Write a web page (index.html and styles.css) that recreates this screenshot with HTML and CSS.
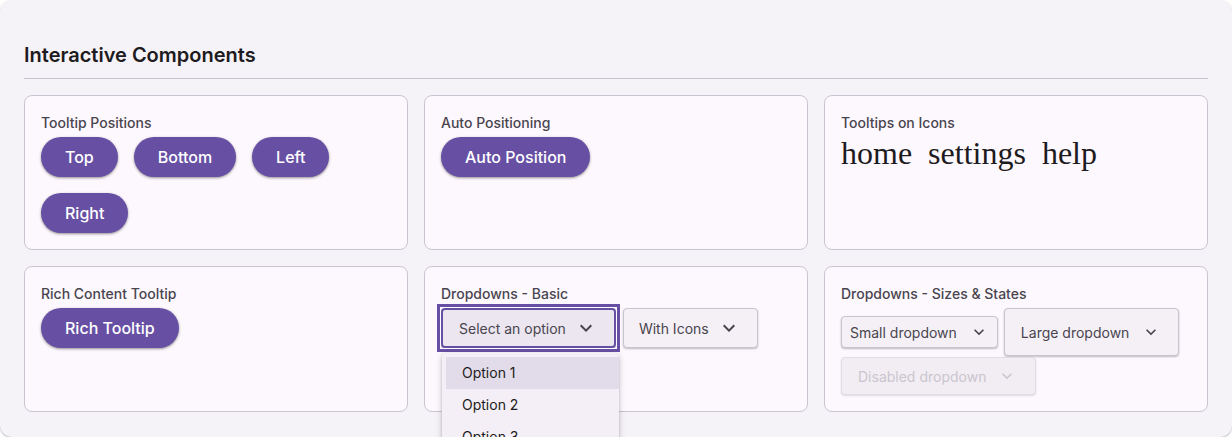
FILE: index.html
```html
<!DOCTYPE html>
<html lang="en">
<head>
<meta charset="utf-8">
<title>Interactive Components</title>
<link rel="stylesheet" href="styles.css">
</head>
<body>
<section class="panel">
  <h2 class="panel-title">Interactive Components</h2>
  <div class="grid">
    <div class="card">
      <div class="card-label">Tooltip Positions</div>
      <div class="btn-row">
        <button class="pill">Top</button>
        <button class="pill">Bottom</button>
        <button class="pill">Left</button>
        <button class="pill">Right</button>
      </div>
    </div>
    <div class="card">
      <div class="card-label">Auto Positioning</div>
      <div class="btn-row">
        <button class="pill">Auto Position</button>
      </div>
    </div>
    <div class="card">
      <div class="card-label">Tooltips on Icons</div>
      <div class="icon-row">
        <span class="icon-text">home</span>
        <span class="icon-text">settings</span>
        <span class="icon-text">help</span>
      </div>
    </div>
    <div class="card">
      <div class="card-label">Rich Content Tooltip</div>
      <div class="btn-row">
        <button class="pill">Rich Tooltip</button>
      </div>
    </div>
    <div class="card card-menu">
      <div class="card-label">Dropdowns - Basic</div>
      <div class="dd-row">
        <div class="dd-wrap">
          <button class="dd dd-md dd-focus">Select an option
            <svg class="chev chev-24" viewBox="0 0 24 24"><path d="M16.59 8.59L12 13.17 7.41 8.59 6 10l6 6 6-6z"/></svg>
          </button>
          <ul class="menu">
            <li class="menu-item active">Option 1</li>
            <li class="menu-item">Option 2</li>
            <li class="menu-item">Option 3</li>
          </ul>
        </div>
        <button class="dd dd-md">With Icons
          <svg class="chev chev-24" viewBox="0 0 24 24"><path d="M16.59 8.59L12 13.17 7.41 8.59 6 10l6 6 6-6z"/></svg>
        </button>
      </div>
    </div>
    <div class="card">
      <div class="card-label">Dropdowns - Sizes &amp; States</div>
      <div class="dd-sizes">
        <button class="dd dd-sm">Small dropdown
          <svg class="chev chev-20" viewBox="0 0 24 24"><path d="M16.59 8.59L12 13.17 7.41 8.59 6 10l6 6 6-6z"/></svg>
        </button>
        <button class="dd dd-lg">Large dropdown
          <svg class="chev chev-20" viewBox="0 0 24 24"><path d="M16.59 8.59L12 13.17 7.41 8.59 6 10l6 6 6-6z"/></svg>
        </button>
        <button class="dd dd-disabled" disabled>Disabled dropdown
          <svg class="chev chev-20" viewBox="0 0 24 24"><path d="M16.59 8.59L12 13.17 7.41 8.59 6 10l6 6 6-6z"/></svg>
        </button>
      </div>
    </div>
  </div>
</section>
</body>
</html>
```
FILE: styles.css
```css
* { box-sizing: border-box; }
html, body {
  margin: 0;
  background: #ffffff;
  font-family: Inter, "Noto Sans", sans-serif;
  overflow: hidden;
}
.panel {
  height: 437px;
  background: #f5f2f8;
  border-radius: 12px;
  box-shadow: 0 1px 2px rgba(0,0,0,0.28);
  padding: 41px 24px 25px 24px;
}
.panel-title {
  margin: 0 0 16px 0;
  font-size: 20px;
  line-height: 28px;
  font-weight: 600;
  color: #1d1b20;
  padding-bottom: 9px;
  border-bottom: 1px solid #cac4d0;
}
.grid {
  display: grid;
  grid-template-columns: repeat(3, 1fr);
  gap: 16px;
}
.card {
  background: #fdf8fd;
  border: 1px solid #cac4d0;
  border-radius: 8px;
  padding: 16px;
  min-height: 155px;
}
.grid .card:nth-child(n+4) { min-height: 0; }
.card-menu { position: relative; z-index: 2; }
.card-label {
  font-size: 14px;
  line-height: 20px;
  font-weight: 500;
  color: #49454f;
  padding-top: 1px;
  margin-bottom: 4px;
}
.btn-row {
  display: flex;
  flex-wrap: wrap;
  gap: 16px;
}
.pill {
  height: 40px;
  padding: 0 24px;
  border: none;
  border-radius: 20px;
  background: #6750a4;
  color: #ffffff;
  font-family: Inter, "Noto Sans", sans-serif;
  font-size: 16px;
  font-weight: 500;
  box-shadow: 0 1px 3px rgba(0,0,0,0.3), 0 1px 2px rgba(0,0,0,0.15);
}
.icon-row {
  display: flex;
  gap: 16px;
}
.icon-text {
  font-family: "Liberation Serif", "Times New Roman", serif;
  font-size: 32px;
  line-height: 33px;
  color: #1d1b20;
}
.dd-row {
  display: flex;
  align-items: center;
  gap: 7px;
}
.dd-wrap { position: relative; display: flex; }
.dd {
  display: inline-flex;
  align-items: center;
  gap: 8px;
  font-family: Inter, "Noto Sans", sans-serif;
  font-size: 14px;
  font-weight: 400;
  color: #49454f;
  background: #f4f0f6;
  border: 1px solid #cac4d0;
  border-radius: 4px;
  box-shadow: 0 1px 2px rgba(0,0,0,0.25);
  white-space: nowrap;
}
.chev { fill: #49454f; flex: none; }
.chev-24 { width: 24px; height: 24px; }
.chev-20 { width: 20px; height: 20px; }
.dd-md { height: 40px; padding: 0 16px; }
.dd-md:not(.dd-focus) { padding-left: 15px; }
.dd-focus {
  position: relative;
  border: 2px solid #6750a4;
  background: #ebe6ef;
}
.dd-focus::after {
  content: "";
  position: absolute;
  top: -6px; left: -6px; right: -6px; bottom: -6px;
  border: 3px solid #6750a4;
  box-shadow: inset 0 0 0 1px #ffffff;
  pointer-events: none;
}
.menu {
  position: absolute;
  top: 45px;
  left: 1px;
  width: 177px;
  margin: 0;
  list-style: none;
  padding: 4px 0 4px 4px;
  background: #f4eff6;
  border-radius: 4px;
  box-shadow: 0 2px 6px rgba(0,0,0,0.22), 0 1px 2px rgba(0,0,0,0.15);
}
.menu-item {
  height: 32px;
  line-height: 32px;
  padding-left: 16px;
  font-size: 14px;
  color: #1d1b20;
}
.menu-item.active { background: #e2dcea; }
.dd-sizes {
  display: flex;
  flex-wrap: wrap;
  align-items: center;
  column-gap: 6px;
  row-gap: 1px;
}
.dd-sm { height: 32px; padding: 0 8px; gap: 12px; }
.dd-lg { height: 48px; padding: 0 17px 0 16px; gap: 12px; }
.dd-disabled {
  height: 38px;
  padding: 0 18px 0 16px;
  gap: 11px;
  color: #cbc5cf;
  background: #f1edf3;
  border-color: #e0dbe4;
  box-shadow: 0 1px 2px rgba(0,0,0,0.12);
}
.dd-disabled .chev { fill: #cbc5cf; }
```
